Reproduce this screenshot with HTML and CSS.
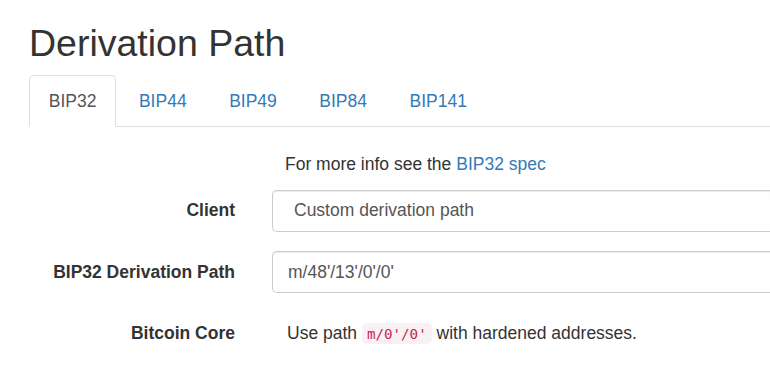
FILE: index.html
```html
<!DOCTYPE html>
<html lang="en">
<head>
    <meta charset="UTF-8">
    <meta name="viewport" content="width=device-width, initial-scale=1.0">
    <title>Derivation Path</title>
    <link rel="stylesheet" href="styles.css">
</head>
<body>

<div class="container">
    <h2>Derivation Path</h2>

    <!-- Abas -->
    <ul class="nav-tabs">
        <li class="active"><a href="#bip32">BIP32</a></li>
        <li><a href="#bip44">BIP44</a></li>
        <li><a href="#bip49">BIP49</a></li>
        <li><a href="#bip84">BIP84</a></li>
        <li><a href="#bip141">BIP141</a></li>
    </ul>

    <!-- Conteúdo da aba BIP32 -->
    <form class="form-horizontal">
        <div class="form-row">
            <div></div>
            <p class="help">For more info see the <a href="#">BIP32 spec</a></p>
        </div>
        <div class="form-group">
            <label for="bip32-client" class="control-label">Client</label>
            <select id="bip32-client" class="form-control client">
                <option value="custom">Custom derivation path</option>
            </select>
        </div>
        <div class="form-group">
            <label for="bip32-path" class="control-label">BIP32 Derivation Path</label>
            <input id="bip32-path" type="text" class="form-control" value="m/48'/13'/0'/0'">
        </div>
        <div class="form-group">
            <label class="control-label">Bitcoin Core</label>
            <p class="form-control-static">Use path <code>m/0'/0'</code> with hardened addresses.</p>
        </div>
    </form>
</div>

</body>
</html>
```

FILE: styles.css
```css
body {
    font-family: "Liberation Sans", Arial, sans-serif;
    font-size: 17.5px;
    line-height: 25px;
    color: #333;
    background-color: #fff;
    margin: 0;
    padding: 0;
}
a {
    color: #337ab7;
    text-decoration: none;
}
.container {
    padding-left: 29px;
}
h2 {
    font-size: 37.5px;
    font-weight: 500;
    line-height: 41.25px;
    margin: 23px 0 10.75px;
}

/* Abas */
.nav-tabs {
    display: flex;
    list-style: none;
    margin: 0;
    padding: 0;
    border-bottom: 1px solid #ddd;
}
.nav-tabs li {
    margin-right: 3px;
    margin-bottom: -1px;
}
.nav-tabs a {
    display: block;
    padding: 12.5px 18.75px;
    line-height: 25px;
    border: 1px solid transparent;
    border-radius: 5px 5px 0 0;
}
.nav-tabs .active a {
    color: #555;
    background-color: #fff;
    border-color: #ddd #ddd transparent;
}

/* Formulário (o lado direito continua além da tela) */
.form-horizontal {
    padding-top: 25px;
}
.form-row,
.form-group {
    display: grid;
    grid-template-columns: 206px 1fr;
    column-gap: 37px;
}
.form-group {
    margin-bottom: 18.75px;
}
.help {
    margin: 0 0 12.5px;
    padding-left: 13px;
}
.control-label {
    font-weight: bold;
    text-align: right;
    padding-top: 8.75px;
}
.form-control {
    display: block;
    box-sizing: border-box;
    width: 100%;
    height: 42.5px;
    padding: 7.5px 15px;
    font-family: inherit;
    font-size: 17.5px;
    line-height: 25px;
    color: #555;
    background-color: #fff;
    border: 1px solid #ccc;
    border-right: 0;
    border-radius: 5px 0 0 5px;
    box-shadow: inset 0 1px 1px rgba(0, 0, 0, 0.075);
    margin: 0;
}
.client {
    appearance: none;
    padding-left: 21px;
}
.form-control-static {
    margin: 0;
    padding: 8.75px 0 8.75px 15px;
}
code {
    font-family: "DejaVu Sans Mono", Consolas, monospace;
    font-size: 14.2px;
    padding: 2.5px 5px;
    color: #c7254e;
    background-color: #f9f2f4;
    border-radius: 5px;
}
```
